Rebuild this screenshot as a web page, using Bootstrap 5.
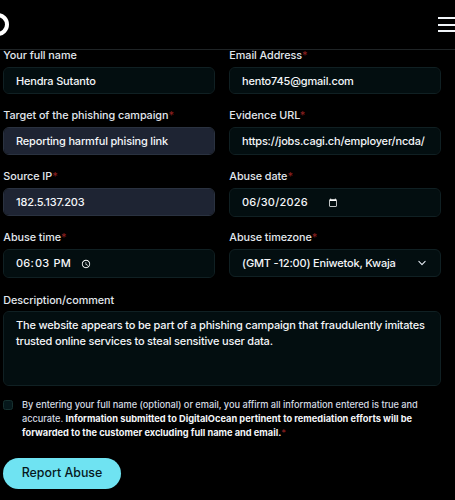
<!doctype html>
<html lang="en">
<head>
<meta charset="utf-8">
<title>Report Abuse</title>
<link href="https://cdn.jsdelivr.net/npm/bootstrap@5.3.0/dist/css/bootstrap.min.css" rel="stylesheet">
<style>
html, body { background: #000; height: 100%; overflow: hidden; }
body { font-family: Inter, "Liberation Sans", sans-serif; color: #e2e8f0; font-size: 13px; }
.topbar { height: 50px; border-bottom: 1px solid #1f2426; position: relative; overflow: hidden; }
.logo-ring { position: absolute; left: -14px; top: 13px; width: 23px; height: 23px; border: 4px solid #fff; border-radius: 50%; }
.burger { position: absolute; right: 0; top: 17px; width: 17px; display: flex; flex-direction: column; gap: 4.5px; }
.burger i { display: block; height: 2px; background: #f1f5f9; }
.abuse-form { padding: 0 14px 0 3px; }
.field-grid { display: grid; grid-template-columns: 212px 212px; grid-template-rows: 60px 61px 61px 62px; column-gap: 14px; }
.fld-label { display: block; font-size: 10.8px; letter-spacing: -.05px; font-weight: 450; line-height: 12px; margin: 0 0 5px; color: #e2e7ed; height: 12px; padding-left: .3px; }
.desc .fld-label { margin: 1px 0 4px; }
.req { color: #8a1f1f; }
.fld .form-control, .fld .form-select, .desc .form-control {
  background-color: #030e10; border: 1px solid #102023; border-radius: 6px; color: #f4f6f9;
  font-family: Inter, "Liberation Sans", sans-serif; font-size: 11px; font-weight: 450; letter-spacing: -.18px; line-height: 15px; padding: 5px 12px; height: 28px; box-shadow: none;
}
.row-first .form-control { height: 27px; }
.fld .form-control.filled { background-color: #1e2433; border-color: #2a3240; }
.fld .form-control[type=date], .fld .form-control[type=time] { color-scheme: dark; width: 212px; height: 29px; letter-spacing: .2px; }
input::-webkit-datetime-edit { flex: none; }
input::-webkit-calendar-picker-indicator { width: 10px; height: 10px; padding: 0; margin: 0; }
input[type=date]::-webkit-calendar-picker-indicator { margin-left: -4px; }
input[type=time]::-webkit-calendar-picker-indicator { margin-left: 6px; }
.fld .form-select { color-scheme: dark; padding-left: 12px; padding-right: 44px; background-position: right 13px center; background-size: 10px; background-image: url("data:image/svg+xml,%3csvg xmlns='http://www.w3.org/2000/svg' viewBox='0 0 16 16'%3e%3cpath fill='none' stroke='%23e2e8f0' stroke-linecap='round' stroke-linejoin='round' stroke-width='1.8' d='m3 5.5 5 5 5-5'/%3e%3c/svg%3e"); }
.desc .form-control { height: 75px; line-height: 15.5px; padding: 6px 12px; resize: none; width: 100%; }
.consent { display: flex; gap: 9px; margin-top: 14px; }
.consent .form-check-input { flex: none; width: 10px; height: 10px; margin: 0; background-color: #06181b; border: 1px solid #16302f; border-radius: 2.5px; }
.consent label { font-size: 9.25px; font-weight: 450; letter-spacing: -.04px; line-height: 14.2px; color: #d3dae2; width: 418px; margin-top: -2px; }
.consent strong { color: #f4f6f9; font-weight: 700; letter-spacing: 0; }
.send-btn { background: #6fe3f2; color: #06181c; border: 0; border-radius: 16px; font-size: 12.4px; font-weight: 450; width: 118px; height: 31px; margin-top: 17px; padding: 1px 0 0; }
.send-btn:hover { background: #6fe3f2; color: #06181c; }
</style>
</head>
<body>
<header class="topbar">
  <span class="logo-ring"></span>
  <span class="burger"><i></i><i></i><i></i></span>
</header>
<form class="abuse-form">
  <div class="field-grid">
    <div class="fld row-first"><label class="fld-label" for="a">Your full name</label><input id="a" class="form-control" value="Hendra Sutanto"></div>
    <div class="fld row-first"><label class="fld-label" for="b">Email Address<span class="req">*</span></label><input id="b" class="form-control" value="hento745@gmail.com"></div>
    <div class="fld"><label class="fld-label" for="c">Target of the phishing campaign<span class="req">*</span></label><input id="c" class="form-control filled" value="Reporting harmful phising link"></div>
    <div class="fld"><label class="fld-label" for="d">Evidence URL<span class="req">*</span></label><input id="d" class="form-control" value="https://jobs.cagi.ch/employer/ncda/"></div>
    <div class="fld"><label class="fld-label" for="e">Source IP<span class="req">*</span></label><input id="e" class="form-control filled" value="182.5.137.203"></div>
    <div class="fld"><label class="fld-label" for="f">Abuse date<span class="req">*</span></label><input id="f" type="date" class="form-control" value="2026-06-30"></div>
    <div class="fld"><label class="fld-label" for="g">Abuse time<span class="req">*</span></label><input id="g" type="time" class="form-control" value="18:03"></div>
    <div class="fld"><label class="fld-label" for="h">Abuse timezone<span class="req">*</span></label><select id="h" class="form-select"><option>(GMT -12:00) Eniwetok, Kwajalein</option></select></div>
  </div>
  <div class="desc">
    <label class="fld-label" for="i">Description/comment</label>
    <textarea id="i" class="form-control">The website appears to be part of a phishing campaign that fraudulently imitates trusted online services to steal sensitive user data.</textarea>
  </div>
  <div class="consent">
    <input id="j" type="checkbox" class="form-check-input">
    <label for="j">By entering your full name (optional) or email, you affirm all information entered is true and accurate. <strong>Information submitted to DigitalOcean pertinent to remediation efforts will be forwarded to the customer excluding full name and email.</strong><span class="req">*</span></label>
  </div>
  <button type="button" class="btn send-btn">Report Abuse</button>
</form>
<script src="https://cdn.jsdelivr.net/npm/bootstrap@5.3.0/dist/js/bootstrap.bundle.min.js"></script>
</body>
</html>
